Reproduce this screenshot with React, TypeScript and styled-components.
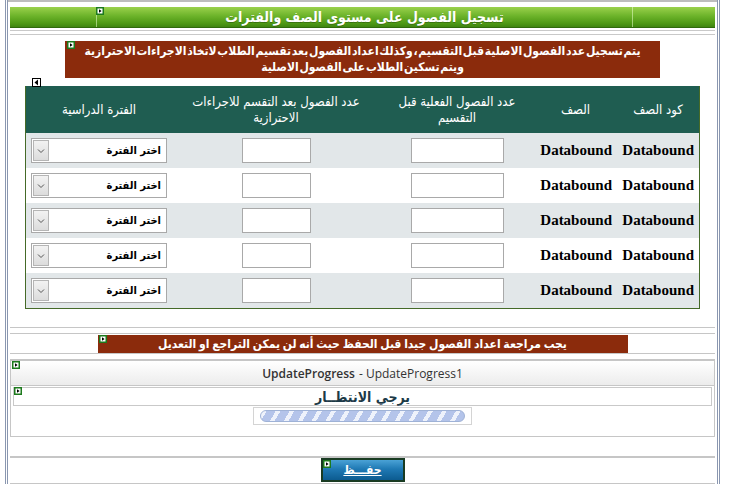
import React from "react";
import styled, { createGlobalStyle } from "styled-components";

const GlobalStyle = createGlobalStyle`
  html, body {
    margin: 0;
    padding: 0;
    background: #fff;
  }
  body {
    font-family: "DejaVu Sans Condensed", "DejaVu Sans", "Liberation Sans", sans-serif;
  }
`;

const Frame = styled.div`
  box-sizing: border-box;
  position: relative;
  width: 715px;
  height: 484px;
  margin-left: 5px;
  padding: 0 2px;
  border-left: 3px double #8a97b0;
  border-right: 3px double #8a97b0;
  direction: rtl;
  overflow: hidden;
`;

const TopStrip = styled.div`
  height: 5px;
  margin: 0 -2px;
  border-top: 2px solid #bdbdbd;
`;

const TitleBar = styled.div`
  display: grid;
  grid-template-columns: 83px 536px 1fr;
  height: 20px;
  background: linear-gradient(#9ad14c 0%, #6cb32a 45%, #4f9a16 80%, #3f8510 100%);
  border-bottom: 1px solid #2f6a0c;
`;

const TitleCell = styled.div`
  display: flex;
  align-items: center;
  justify-content: center;
  border-left: 1px solid rgba(230, 255, 200, 0.55);
  color: #fff;
  font-size: 14px;
  font-weight: bold;
  text-shadow: 0 1px 0 rgba(0, 0, 0, 0.25);
  &:last-child {
    border-left: none;
  }
`;

const DoubleRule = styled.div`
  margin-top: 2px;
  height: 3px;
  border-top: 1px solid #c9c9c9;
  border-bottom: 1px solid #c9c9c9;
`;

const NoticeRow = styled.div`
  display: flex;
  justify-content: center;
  box-sizing: border-box;
  height: 51px;
  padding-top: 6px;
`;

const Notice = styled.div`
  box-sizing: border-box;
  width: 595px;
  height: 37px;
  padding: 2px 4px 0;
  background: #8b2b0c;
  color: #fff;
  font-size: 12px;
  font-weight: bold;
  line-height: 16px;
  word-spacing: -3px;
  white-space: nowrap;
  text-align: center;
`;

const GridWrap = styled.div`
  width: 673px;
  margin: 0 auto;
  border: 1px solid #456a28;
  border-top: none;
`;

const GridRow = styled.div<{ $bg: string; $h: number }>`
  display: grid;
  grid-template-columns: 82px 83px 154px 208px 146px;
  height: ${(p) => p.$h}px;
  background: ${(p) => p.$bg};
  align-items: center;
`;

const HeadCell = styled.div`
  color: #fff;
  font-size: 13px;
  line-height: 16px;
  text-align: center;
  padding: 0 4px;
`;

const BoundCell = styled.div`
  font-family: "Liberation Serif", "Times New Roman", serif;
  font-size: 15px;
  font-weight: bold;
  color: #000;
  text-align: right;
  padding-right: 5px;
  white-space: nowrap;
`;

const CenterCell = styled.div`
  display: flex;
  justify-content: center;
`;

const TextBox = styled.div<{ $w: number }>`
  box-sizing: border-box;
  width: ${(p) => p.$w}px;
  height: 25px;
  background: #fff;
  border: 1px solid #a9a9a9;
`;

const Select = styled.div`
  box-sizing: border-box;
  display: flex;
  align-items: center;
  justify-content: space-between;
  width: 136px;
  height: 25px;
  padding: 0 5px 0 1px;
  background: #fff;
  border: 1px solid #a9a9a9;
  font-size: 11px;
  font-weight: bold;
  color: #000;
`;

const SelectArrow = styled.span`
  order: 2;
  display: flex;
  align-items: center;
  justify-content: center;
  box-sizing: border-box;
  width: 16px;
  height: 21px;
  background: linear-gradient(#f2f2f2, #dcdcdc);
  border: 1px solid #b5b5b5;
`;

const Warning = styled.div`
  box-sizing: border-box;
  width: 530px;
  height: 18px;
  margin: 1px auto 0;
  background: #8b2b0c;
  color: #fff;
  font-size: 12px;
  font-weight: bold;
  line-height: 18px;
  word-spacing: -1px;
  white-space: nowrap;
  text-align: center;
`;

const Rule = styled.div<{ $top: number; $w?: number }>`
  margin-top: ${(p) => p.$top}px;
  height: ${(p) => p.$w ?? 1}px;
  background: #c6c6c6;
`;

const Panel = styled.div`
  box-sizing: border-box;
  height: 77px;
  border: 1px solid #c6c6c6;
  border-top: none;
`;

const PanelHead = styled.div`
  display: flex;
  justify-content: center;
  align-items: center;
  box-sizing: border-box;
  height: 26px;
  direction: ltr;
  background: linear-gradient(#ffffff, #ececec);
  border-top: 1px solid #c6c6c6;
  border-bottom: 1px solid #c6c6c6;
  font-family: "Open Sans", "Noto Sans", sans-serif;
  font-size: 12px;
  color: #333;
  b {
    font-weight: 600;
    margin-right: 4px;
  }
`;

const WaitBox = styled.div`
  box-sizing: border-box;
  display: flex;
  justify-content: center;
  align-items: center;
  height: 19px;
  margin: 1px 2px 0;
  border: 1px solid #c9c9c9;
  font-size: 14px;
  font-weight: bold;
  color: #1d3a48;
`;

const ProgressFrame = styled.div`
  box-sizing: border-box;
  width: 219px;
  height: 18px;
  margin: 1px auto 0;
  padding: 2px 6px;
  border: 1px solid #d4d4d4;
  direction: ltr;
`;

const ProgressBar = styled.div`
  box-sizing: border-box;
  height: 12px;
  border-radius: 6px;
  border: 1px solid #9fb2d6;
  background: repeating-linear-gradient(
    -60deg,
    #b4c4ea 0px,
    #b4c4ea 8px,
    #eef2fb 8px,
    #eef2fb 12px
  );
`;

const ButtonRow = styled.div`
  display: flex;
  justify-content: center;
  height: 24px;
`;

const SaveButton = styled.button`
  width: 84px;
  height: 24px;
  padding: 0;
  border: 2px solid #193b22;
  background: linear-gradient(#4aa2d6 0%, #1f79b4 45%, #0c5b90 100%);
  color: #fff;
  font-family: "DejaVu Sans Condensed", "DejaVu Sans", sans-serif;
  font-size: 12px;
  font-weight: bold;
  text-decoration: underline;
  cursor: pointer;
`;

const Marker = styled.span<{ $x: number; $y: number }>`
  position: absolute;
  left: ${(p) => p.$x}px;
  top: ${(p) => p.$y}px;
  width: 8px;
  height: 8px;
  line-height: 0;
`;

const BackTab = styled.span`
  position: absolute;
  left: 24px;
  top: 78px;
  width: 9px;
  height: 9px;
  box-sizing: border-box;
  border: 1px solid #000;
  background: #fff;
  line-height: 0;
`;

const DesignGlyph = ({ x, y }: { x: number; y: number }) => (
  <Marker $x={x} $y={y}>
    <svg width={8} height={8} viewBox="0 0 8 8">
      <rect x={0} y={0} width={8} height={8} fill="#1d7a1d" />
      <rect x={1.5} y={1.5} width={5} height={5} fill="#fff" />
      <path d="M3 2.2 L5.6 4 L3 5.8 Z" fill="#000" />
    </svg>
  </Marker>
);

const Chevron = () => (
  <svg width={8} height={6} viewBox="0 0 8 6">
    <path d="M1 1.5 L4 4.5 L7 1.5" fill="none" stroke="#555" strokeWidth={1} />
  </svg>
);

const rows = [0, 1, 2, 3, 4];

const App = (): React.JSX.Element => {
  return (
    <>
      <GlobalStyle />
      <Frame>
        <TopStrip />
        <TitleBar>
          <TitleCell />
          <TitleCell>تسجيل الفصول على مستوى الصف والفترات</TitleCell>
          <TitleCell />
        </TitleBar>
        <DoubleRule />
        <NoticeRow>
          <Notice>
            يتم تسجيل عدد الفصول الاصلية قبل التقسيم ، وكذلك اعداد الفصول بعد تقسيم الطلاب لاتخاذ الاجراءات الاحترازية
            <br />
            ويتم تسكين الطلاب على الفصول الاصلية
          </Notice>
        </NoticeRow>
        <BackTab>
          <svg width={7} height={7} viewBox="0 0 7 7">
            <path d="M5 0.5 L1.5 3.5 L5 6.5 Z" fill="#000" />
          </svg>
        </BackTab>
        <GridWrap>
          <GridRow $bg="#1f5d51" $h={47}>
            <HeadCell>كود الصف</HeadCell>
            <HeadCell>الصف</HeadCell>
            <HeadCell>عدد الفصول الفعلية قبل التقسيم</HeadCell>
            <HeadCell>عدد الفصول بعد التقسم للاجراءات الاحترازية</HeadCell>
            <HeadCell>الفترة الدراسية</HeadCell>
          </GridRow>
          {rows.map((i) => (
            <GridRow key={i} $bg={i % 2 === 0 ? "#e2e7e9" : "#ffffff"} $h={35}>
              <BoundCell>Databound</BoundCell>
              <BoundCell>Databound</BoundCell>
              <CenterCell>
                <TextBox $w={93} />
              </CenterCell>
              <CenterCell>
                <TextBox $w={69} />
              </CenterCell>
              <CenterCell>
                <Select>
                  <span>اختر الفترة</span>
                  <SelectArrow>
                    <Chevron />
                  </SelectArrow>
                </Select>
              </CenterCell>
            </GridRow>
          ))}
        </GridWrap>
        <Rule $top={18} />
        <Rule $top={5} />
        <Warning>يجب مراجعة اعداد الفصول جيدا قبل الحفظ حيث أنه لن يمكن التراجع او التعديل</Warning>
        <Rule $top={0} />
        <Rule $top={5} />
        <Panel>
          <PanelHead>
            <b>UpdateProgress</b> - UpdateProgress1
          </PanelHead>
          <WaitBox>يرجي الانتظــار</WaitBox>
          <ProgressFrame>
            <ProgressBar />
          </ProgressFrame>
        </Panel>
        <Rule $top={19} $w={2} />
        <ButtonRow>
          <SaveButton type="button">حفـــظ</SaveButton>
        </ButtonRow>
        <Rule $top={1} />
        <DesignGlyph x={88} y={7} />
        <DesignGlyph x={59} y={41} />
        <DesignGlyph x={91} y={335} />
        <DesignGlyph x={4} y={361} />
        <DesignGlyph x={6} y={387} />
        <DesignGlyph x={315} y={460} />
      </Frame>
    </>
  );
};

export default App;
